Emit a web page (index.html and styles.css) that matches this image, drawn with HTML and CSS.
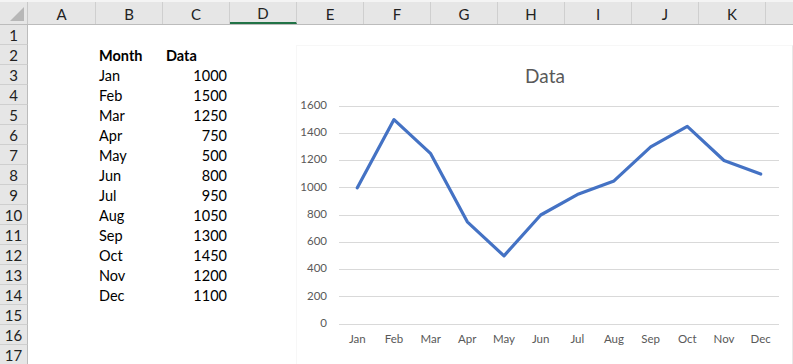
FILE: index.html
```html
<!DOCTYPE html>
<html>
<head>
<meta charset="utf-8">
<link rel="stylesheet" href="styles.css">
</head>
<body>
<div class="sheet">
  <div class="row head">
    <div class="corner"><span class="tri"></span></div>
    <div class="ch">A</div><div class="ch">B</div><div class="ch">C</div><div class="ch active">D</div>
    <div class="ch">E</div><div class="ch">F</div><div class="ch">G</div><div class="ch">H</div>
    <div class="ch">I</div><div class="ch">J</div><div class="ch">K</div><div class="ch last"></div>
  </div>
  <div class="row"><div class="rh">1</div></div>
  <div class="row"><div class="rh">2</div><div class="c"></div><div class="c b">Month</div><div class="c b">Data</div></div>
  <div class="row"><div class="rh">3</div><div class="c"></div><div class="c">Jan</div><div class="c n">1000</div></div>
  <div class="row"><div class="rh">4</div><div class="c"></div><div class="c">Feb</div><div class="c n">1500</div></div>
  <div class="row"><div class="rh">5</div><div class="c"></div><div class="c">Mar</div><div class="c n">1250</div></div>
  <div class="row"><div class="rh">6</div><div class="c"></div><div class="c">Apr</div><div class="c n">750</div></div>
  <div class="row"><div class="rh">7</div><div class="c"></div><div class="c">May</div><div class="c n">500</div></div>
  <div class="row"><div class="rh">8</div><div class="c"></div><div class="c">Jun</div><div class="c n">800</div></div>
  <div class="row"><div class="rh">9</div><div class="c"></div><div class="c">Jul</div><div class="c n">950</div></div>
  <div class="row"><div class="rh">10</div><div class="c"></div><div class="c">Aug</div><div class="c n">1050</div></div>
  <div class="row"><div class="rh">11</div><div class="c"></div><div class="c">Sep</div><div class="c n">1300</div></div>
  <div class="row"><div class="rh">12</div><div class="c"></div><div class="c">Oct</div><div class="c n">1450</div></div>
  <div class="row"><div class="rh">13</div><div class="c"></div><div class="c">Nov</div><div class="c n">1200</div></div>
  <div class="row"><div class="rh">14</div><div class="c"></div><div class="c">Dec</div><div class="c n">1100</div></div>
  <div class="row"><div class="rh">15</div></div>
  <div class="row"><div class="rh">16</div></div>
  <div class="row"><div class="rh">17</div></div>

  <div class="chart">
    <svg class="chart-svg" width="495" height="318" viewBox="0 0 495 318">
      <text class="title" x="248" y="32">Data</text>
      <g class="grid">
        <line x1="42" x2="482" y1="60.5" y2="60.5"/>
        <line x1="42" x2="482" y1="87.5" y2="87.5"/>
        <line x1="42" x2="482" y1="114.5" y2="114.5"/>
        <line x1="42" x2="482" y1="141.5" y2="141.5"/>
        <line x1="42" x2="482" y1="169.5" y2="169.5"/>
        <line x1="42" x2="482" y1="196.5" y2="196.5"/>
        <line x1="42" x2="482" y1="223.5" y2="223.5"/>
        <line x1="42" x2="482" y1="250.5" y2="250.5"/>
        <line x1="42" x2="482" y1="278.5" y2="278.5"/>
      </g>
      <g class="ylab">
        <text x="30" y="60">1600</text>
        <text x="30" y="87">1400</text>
        <text x="30" y="114">1200</text>
        <text x="30" y="142">1000</text>
        <text x="30" y="169">800</text>
        <text x="30" y="196">600</text>
        <text x="30" y="223">400</text>
        <text x="30" y="251">200</text>
        <text x="30" y="278">0</text>
      </g>
      <g class="xlab">
        <text x="60.3" y="294">Jan</text>
        <text x="97" y="294">Feb</text>
        <text x="133.7" y="294">Mar</text>
        <text x="170.3" y="294">Apr</text>
        <text x="207" y="294">May</text>
        <text x="243.7" y="294">Jun</text>
        <text x="280.3" y="294">Jul</text>
        <text x="317" y="294">Aug</text>
        <text x="353.7" y="294">Sep</text>
        <text x="390.3" y="294">Oct</text>
        <text x="427" y="294">Nov</text>
        <text x="463.7" y="294">Dec</text>
      </g>
      <polyline class="series" points="60.3,141.8 97,73.6 133.7,107.7 170.3,175.8 207,209.9 243.7,169 280.3,148.6 317,134.9 353.7,100.9 390.3,80.4 427,114.5 463.7,128.1"/>
    </svg>
  </div>
</div>
</body>
</html>
```

FILE: styles.css
```css
html, body {
  margin: 0;
  padding: 0;
  background: #ffffff;
}
.sheet {
  position: relative;
  width: 793px;
  height: 364px;
  overflow: hidden;
  font-family: Lato, "Open Sans", sans-serif;
  font-size: 14.5px;
  color: #000;
}
.row {
  display: grid;
  grid-template-columns: 28px 68px repeat(10, 67px) 1fr;
  height: 20px;
}
.row.head {
  height: 25px;
  box-sizing: border-box;
  border-top: 2px solid #f4f4f4;
  background: #e6e6e6;
  border-bottom: 1px solid #bcbcbc;
}
.corner {
  position: relative;
  border-right: 1px solid #c8c8c8;
}
.tri {
  position: absolute;
  right: 3px;
  bottom: 3px;
  width: 0;
  height: 0;
  border-left: 14px solid transparent;
  border-bottom: 14px solid #b7b7b7;
}
.ch {
  display: flex;
  align-items: center;
  justify-content: center;
  border-right: 1px solid #cfcfcf;
  color: #222;
  font-size: 15px;
  box-sizing: border-box;
  padding-top: 1px;
}
.ch.active {
  border-bottom: 2px solid #217346;
  color: #222;
}
.ch.last {
  border-right: none;
}
.rh {
  background: #e6e6e6;
  border-right: 1px solid #bcbcbc;
  border-bottom: 1px solid #cfcfcf;
  box-sizing: border-box;
  display: flex;
  align-items: center;
  justify-content: center;
  color: #222;
  font-size: 15px;
}
.c {
  display: flex;
  align-items: center;
  padding: 0 3px;
  white-space: nowrap;
  box-sizing: border-box;
}
.c.b {
  font-weight: 700;
}
.c.n {
  justify-content: flex-end;
}
.chart {
  position: absolute;
  left: 296px;
  top: 45px;
  width: 495px;
  height: 318px;
  border: 1px solid #f7f7f7;
  border-right-color: #e8e8e8;
  border-bottom-color: #e8e8e8;
  background: #fff;
}
.chart-svg {
  display: block;
  font-family: Lato, "Open Sans", sans-serif;
}
.title {
  font-size: 19px;
  fill: #595959;
  text-anchor: middle;
  dominant-baseline: middle;
}
.grid line {
  stroke: #d9d9d9;
  stroke-width: 1;
}
.ylab text {
  font-size: 11.5px;
  fill: #595959;
  text-anchor: end;
  dominant-baseline: middle;
}
.xlab text {
  font-size: 11.5px;
  fill: #595959;
  text-anchor: middle;
  dominant-baseline: middle;
}
.series {
  fill: none;
  stroke: #4472c4;
  stroke-width: 3.2;
  stroke-linejoin: round;
  stroke-linecap: round;
}
```
